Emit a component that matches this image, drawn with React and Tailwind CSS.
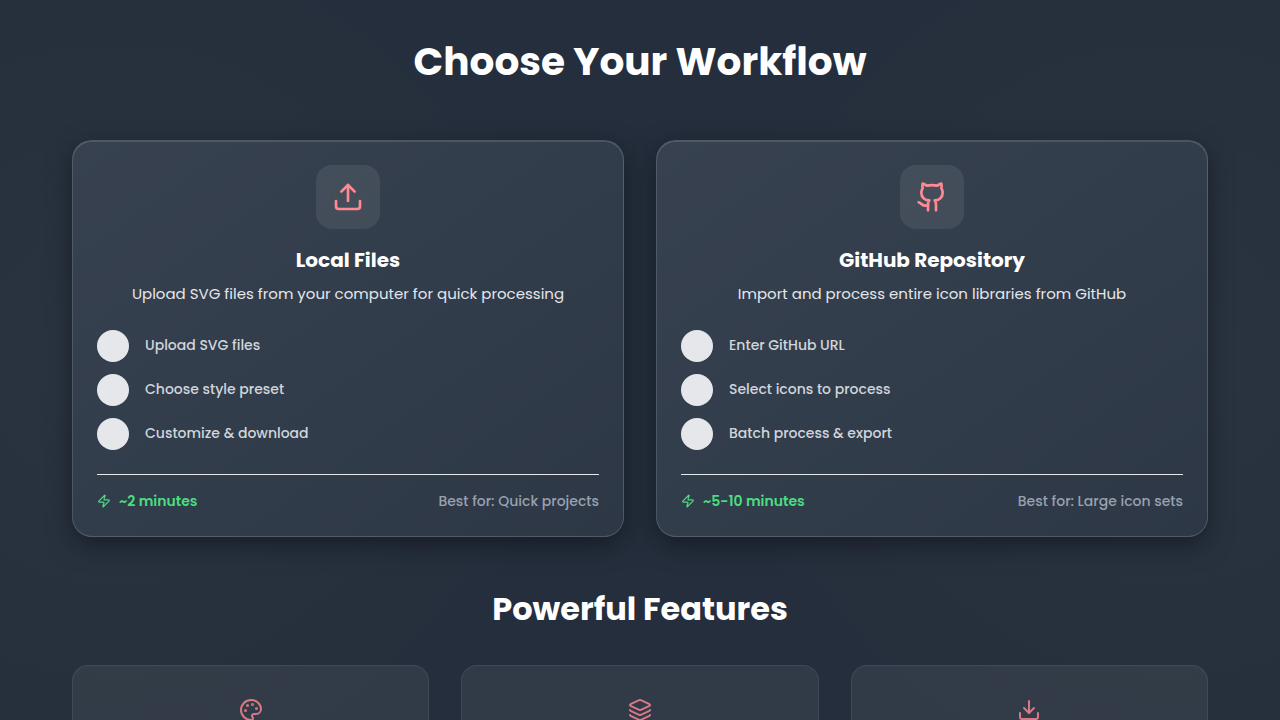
import { Upload, Github, Zap, Palette, Layers, Download } from "lucide-react";

const workflows = [
  {
    icon: Upload,
    title: "Local Files",
    description: "Upload SVG files from your computer for quick processing",
    steps: ["Upload SVG files", "Choose style preset", "Customize & download"],
    time: "~2 minutes",
    bestFor: "Best for: Quick projects",
  },
  {
    icon: Github,
    title: "GitHub Repository",
    description: "Import and process entire icon libraries from GitHub",
    steps: ["Enter GitHub URL", "Select icons to process", "Batch process & export"],
    time: "~5-10 minutes",
    bestFor: "Best for: Large icon sets",
  },
];

const features = [Palette, Layers, Download];

function WorkflowCard({ icon: Icon, title, description, steps, time, bestFor }) {
  return (
    <article className="rounded-[20px] border border-white/15 bg-linear-to-br from-[#37414f] via-[#323d4b] to-[#2d3746] p-6 shadow-[0_8px_24px_rgba(10,12,22,0.5),inset_0_1px_0_rgba(255,255,255,0.12)]">
      <div className="mx-auto flex size-16 items-center justify-center rounded-2xl bg-white/8">
        <Icon size={32} className="text-[#ff8a94]" aria-hidden="true" />
      </div>
      <h3 className="mt-4 text-center text-xl leading-normal font-bold text-white">{title}</h3>
      <p className="mt-2 text-center text-[15px] leading-normal text-gray-200">{description}</p>
      <ol className="mt-6 flex flex-col gap-3">
        {steps.map((step) => (
          <li key={step} className="flex items-center gap-4">
            <span className="size-8 shrink-0 rounded-full bg-[#e5e7eb]" />
            <span className="text-sm leading-normal font-medium text-gray-300">{step}</span>
          </li>
        ))}
      </ol>
      <div className="mt-6 flex items-center justify-between gap-4 border-t border-gray-200 pt-4 text-sm leading-normal font-medium">
        <span className="flex items-center gap-2 font-semibold text-[#4ade80]">
          <Zap size={14} aria-hidden="true" />
          {time}
        </span>
        <span className="text-gray-400">{bestFor}</span>
      </div>
    </article>
  );
}

export default function App() {
  return (
    <div className="h-screen overflow-hidden bg-[#252e3c] bg-[radial-gradient(circle_at_9%_50%,#2a3440_0,#27313d_270px,transparent_460px),radial-gradient(circle_at_91%_50%,#2a3440_0,#27313d_270px,transparent_460px)] font-['Poppins','Inter',sans-serif]">
      <main className="mx-auto max-w-[1200px] px-8 pt-8">
        <h1 className="text-center text-[39px] leading-[60px] font-bold text-white">Choose Your Workflow</h1>
        <section className="mt-12 grid grid-cols-2 gap-8">
          {workflows.map((workflow) => (
            <WorkflowCard key={workflow.title} {...workflow} />
          ))}
        </section>
        <h2 className="mt-12 text-center text-[32px] leading-[48px] font-bold text-white">Powerful Features</h2>
        <section className="mt-8 grid grid-cols-3 gap-8">
          {features.map((Icon, index) => (
            <article key={index} className="flex h-48 justify-center rounded-2xl border border-white/8 bg-white/6 p-8">
              <Icon size={24} className="text-[#ff8a94] opacity-80" aria-hidden="true" />
            </article>
          ))}
        </section>
      </main>
    </div>
  );
}
